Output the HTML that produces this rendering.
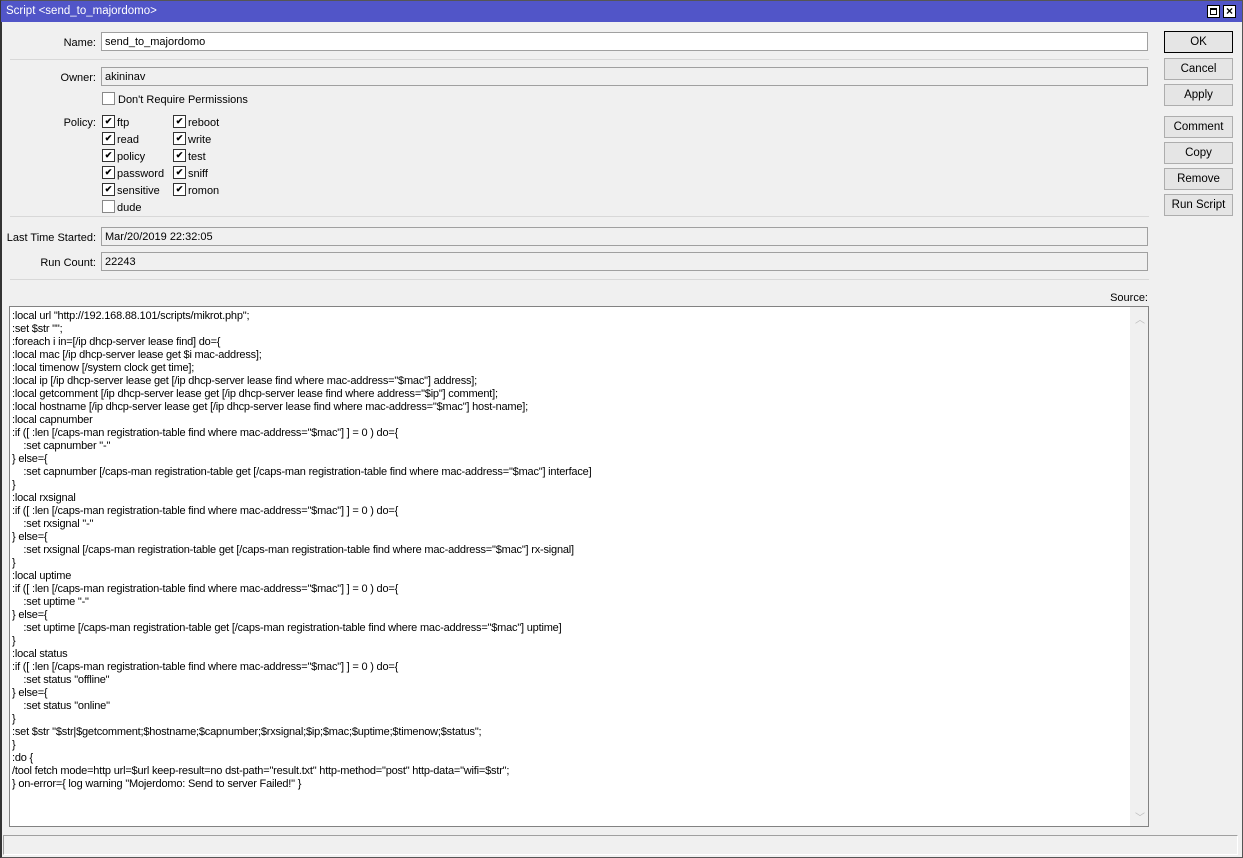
<!DOCTYPE html>
<html><head><meta charset="utf-8"><style>
*{box-sizing:border-box;margin:0;padding:0}
body{width:1243px;height:858px;background:#f0f0f0;font-family:"Liberation Sans",sans-serif;font-size:11px;color:#000;position:relative;overflow:hidden}
.frame{position:absolute;left:0;top:0;width:1243px;height:858px;border:1px solid #555;border-left:2px solid #333}
.title{position:absolute;left:1px;top:1px;width:1241px;height:21px;background:#5155c8;color:#fff;font-size:11.5px;padding:4px 0 0 5px}
.tb{position:absolute;top:5px;width:13px;height:13px;background:#fff;border:1px solid #000}
.a{position:absolute}
.lbl{position:absolute;text-align:right;font-size:11px}
.field{position:absolute;height:19px;border:1px solid #a0a0a0;padding:3px 0 0 3px;font-size:11px}
.ro{background:#f0f0f0}
.w{background:#fff}
.sep{position:absolute;left:10px;width:1139px;height:1px;background:#d8d8d8}
.cb{position:absolute;width:13px;height:13px;border:1px solid #333;background:#fff;font-size:9px;line-height:11px;text-align:center;font-weight:bold}
.cb.off{border-color:#888}
.cl{position:absolute;font-size:11px}
.btn{position:absolute;left:1164px;width:69px;height:22px;border:1px solid #adadad;background:#e5e5e5;text-align:center;line-height:21px;font-size:11.5px}
.src{position:absolute;left:9px;top:306px;width:1140px;height:521px;background:#fff;border:1px solid #828282;padding:3px 0 0 2px;font-size:11px;line-height:13px;white-space:pre;letter-spacing:-0.2px}
.sb{position:absolute;left:1130px;top:307px;width:18px;height:519px;background:#f0f0f0}
</style></head><body>
<div class="frame"></div>
<div class="title">Script &lt;send_to_majordomo&gt;</div>
<div class="tb" style="left:1207px"><div style="position:absolute;left:2px;top:2px;width:7px;height:7px;border:1px solid #000;border-top-width:2px"></div></div>
<div class="tb" style="left:1223px;font-size:12px;font-weight:bold;line-height:11px;text-align:center">×</div>

<div class="lbl" style="right:1147px;top:37px">Name:</div>
<div class="field w" style="left:101px;top:32px;width:1047px">send_to_majordomo</div>
<div class="sep" style="top:59px"></div>
<div class="lbl" style="right:1147px;top:72px">Owner:</div>
<div class="field ro" style="left:101px;top:67px;width:1047px">akininav</div>
<div class="cb off" style="left:102px;top:92px"></div><div class="cl" style="left:118px;top:94px">Don't Require Permissions</div>
<div class="lbl" style="right:1147px;top:117px">Policy:</div>

<div class="cb" style="left:102px;top:115px">✔</div><div class="cl" style="left:117px;top:117px">ftp</div>
<div class="cb" style="left:173px;top:115px">✔</div><div class="cl" style="left:188px;top:117px">reboot</div>
<div class="cb" style="left:102px;top:132px">✔</div><div class="cl" style="left:117px;top:134px">read</div>
<div class="cb" style="left:173px;top:132px">✔</div><div class="cl" style="left:188px;top:134px">write</div>
<div class="cb" style="left:102px;top:149px">✔</div><div class="cl" style="left:117px;top:151px">policy</div>
<div class="cb" style="left:173px;top:149px">✔</div><div class="cl" style="left:188px;top:151px">test</div>
<div class="cb" style="left:102px;top:166px">✔</div><div class="cl" style="left:117px;top:168px">password</div>
<div class="cb" style="left:173px;top:166px">✔</div><div class="cl" style="left:188px;top:168px">sniff</div>
<div class="cb" style="left:102px;top:183px">✔</div><div class="cl" style="left:117px;top:185px">sensitive</div>
<div class="cb" style="left:173px;top:183px">✔</div><div class="cl" style="left:188px;top:185px">romon</div>
<div class="cb off" style="left:102px;top:200px"></div><div class="cl" style="left:117px;top:202px">dude</div>

<div class="sep" style="top:216px"></div>
<div class="lbl" style="right:1147px;top:232px">Last Time Started:</div>
<div class="field ro" style="left:101px;top:227px;width:1047px">Mar/20/2019 22:32:05</div>
<div class="lbl" style="right:1147px;top:257px">Run Count:</div>
<div class="field ro" style="left:101px;top:252px;width:1047px">22243</div>
<div class="sep" style="top:279px"></div>
<div class="lbl" style="right:95px;top:292px">Source:</div>

<div class="src">:local url "http://192.168.88.101/scripts/mikrot.php";
:set $str "";
:foreach i in=[/ip dhcp-server lease find] do={
:local mac [/ip dhcp-server lease get $i mac-address];
:local timenow [/system clock get time];
:local ip [/ip dhcp-server lease get [/ip dhcp-server lease find where mac-address="$mac"] address];
:local getcomment [/ip dhcp-server lease get [/ip dhcp-server lease find where address="$ip"] comment];
:local hostname [/ip dhcp-server lease get [/ip dhcp-server lease find where mac-address="$mac"] host-name];
:local capnumber
:if ([ :len [/caps-man registration-table find where mac-address="$mac"] ] = 0 ) do={
    :set capnumber "-"
} else={
    :set capnumber [/caps-man registration-table get [/caps-man registration-table find where mac-address="$mac"] interface]
}
:local rxsignal
:if ([ :len [/caps-man registration-table find where mac-address="$mac"] ] = 0 ) do={
    :set rxsignal "-"
} else={
    :set rxsignal [/caps-man registration-table get [/caps-man registration-table find where mac-address="$mac"] rx-signal]
}
:local uptime
:if ([ :len [/caps-man registration-table find where mac-address="$mac"] ] = 0 ) do={
    :set uptime "-"
} else={
    :set uptime [/caps-man registration-table get [/caps-man registration-table find where mac-address="$mac"] uptime]
}
:local status
:if ([ :len [/caps-man registration-table find where mac-address="$mac"] ] = 0 ) do={
    :set status "offline"
} else={
    :set status "online"
}
:set $str "$str|$getcomment;$hostname;$capnumber;$rxsignal;$ip;$mac;$uptime;$timenow;$status";
}
:do {
/tool fetch mode=http url=$url keep-result=no dst-path="result.txt" http-method="post" http-data="wifi=$str";
} on-error={ log warning "Mojerdomo: Send to server Failed!" }</div>
<div class="sb"><div class="a" style="left:5px;top:4px;color:#bbb;font-size:10px">︿</div><div class="a" style="left:5px;top:502px;color:#bbb;font-size:10px">﹀</div></div>

<div class="btn" style="top:31px;border:1px solid #000">OK</div>
<div class="btn" style="top:58px">Cancel</div>
<div class="btn" style="top:84px">Apply</div>
<div class="btn" style="top:116px">Comment</div>
<div class="btn" style="top:142px">Copy</div>
<div class="btn" style="top:168px">Remove</div>
<div class="btn" style="top:194px">Run Script</div>

<div class="a" style="left:3px;top:835px;width:1235px;height:20px;border:1px solid #a0a0a0;border-right-color:#fff;border-bottom-color:#fff"></div>
</body></html>
